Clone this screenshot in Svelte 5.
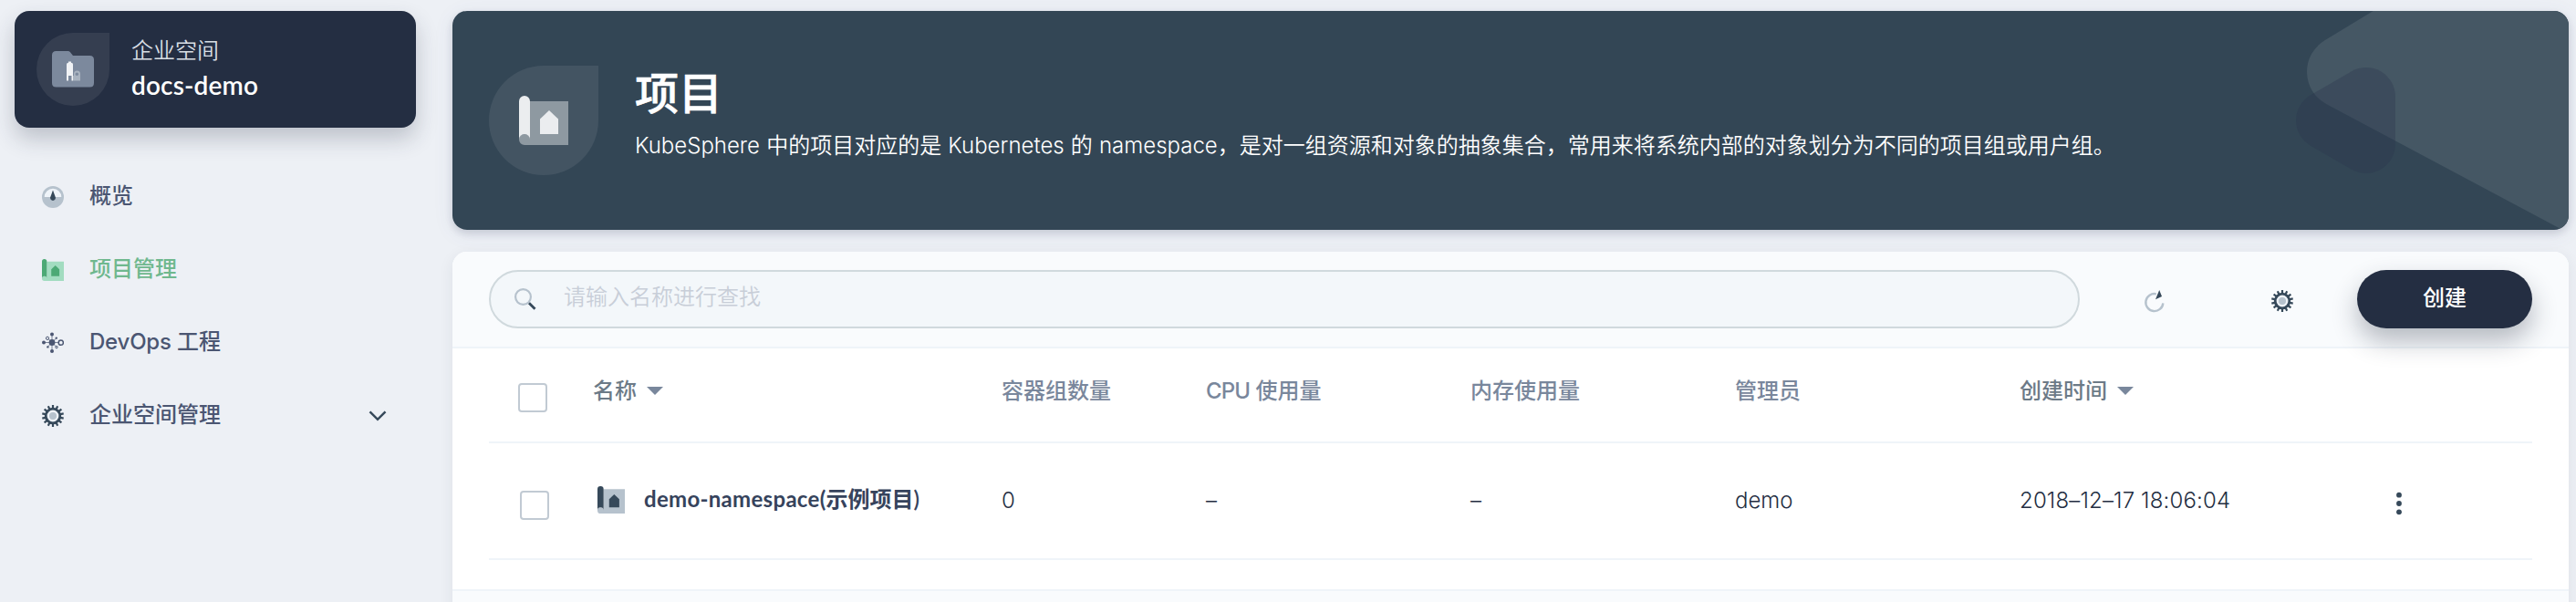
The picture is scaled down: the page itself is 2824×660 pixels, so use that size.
<script>
  const nav = [
    { id: 'overview', label: '概览' },
    { id: 'project', label: '项目管理', active: true },
    { id: 'devops', latin: 'DevOps', label: ' 工程' },
    { id: 'settings', label: '企业空间管理', expandable: true }
  ];
  const teeth = Array.from({ length: 14 }, (_, i) => (i * 360) / 14);
</script>

{#snippet gear()}
  <svg width="24" height="24" viewBox="0 0 24 24">
    <g fill="#36495a">
      {#each teeth as a}
        <rect x="10.9" y="0" width="2.2" height="4.5" transform="rotate({a} 12 12)" />
      {/each}
    </g>
    <circle cx="12" cy="12" r="7.8" fill="#eef2f7" stroke="#36495a" stroke-width="2.8" />
    <circle cx="12" cy="12" r="4" fill="#b6c2cd" />
  </svg>
{/snippet}

{#snippet blueprint(size, dark, light)}
  <svg width={size} height={size} viewBox="0 0 54 54">
    <path d="M12 6H54V54H6A6 6 0 0 1 0 48Q0 42 6 42Q12 42 12 48Z" fill={light} />
    <path d="M0 48V6A6 6 0 0 1 12 6V48A6 6 0 0 0 0 48Z" fill={dark} />
    <path d="M23 25.5L33 16L43 25.5V42H23Z" fill={dark} />
  </svg>
{/snippet}

<div class="page">
  <aside>
    <div class="workspace">
      <div class="drop small">
        <svg width="46" height="40" viewBox="0 0 46 40">
          <path d="M4.5 0H17.5Q19 0 20 1.2L23 5H41.5Q46 5 46 9.5V35Q46 39.5 41.5 39.5H4.5Q0 39.5 0 35V4.5Q0 0 4.5 0Z" fill="#7c899d" />
          <path d="M16 32.500V14.500Q16 13 18 12.800V11.500H21V12.800Q23 13 23 14.500V32.500H21.500V27H18V32.500Z" fill="#f0f2f5" />
          <path fill-rule="evenodd" d="M23 32.500V27H24V25A3.500 3.500 0 0 1 31 25V32.500ZM27.300 23.400A1.800 1.800 0 1 0 27.300 27A1.800 1.800 0 1 0 27.300 23.400Z" fill="#a9b3c0" />
        </svg>
      </div>
      <div class="wstext">
        <div class="wslabel">企业空间</div>
        <div class="wsname">docs-demo</div>
      </div>
    </div>
    <nav>
      {#each nav as item}
        <div class="item" class:active={item.active}>
          <span class="ico">
            {#if item.id === 'overview'}
              <svg width="24" height="24" viewBox="0 0 24 24">
                <circle cx="12" cy="12" r="12" fill="#b6c2cd" />
                <path d="M2.700 12A9.300 9.300 0 0 1 21.300 12Z" fill="#eff4f9" />
                <path d="M12 4.600L14.800 12.300A2.900 2.900 0 1 1 9.200 12.300Z" fill="#36495a" />
              </svg>
            {:else if item.id === 'project'}
              {@render blueprint(24, '#4ca975', '#a2dcc0')}
            {:else if item.id === 'devops'}
              <svg width="24" height="24" viewBox="0 0 24 24" fill="#4b5672" stroke="#4b5672">
                <path d="M11 3V21M2 11.500H18M6 6.500L16 16.500M6.500 16L15.500 7" fill="none" stroke-width="0.700" />
                <circle cx="11" cy="11.500" r="3.400" stroke="none" />
                <circle cx="11" cy="2.500" r="2" stroke="none" />
                <circle cx="11" cy="21" r="2" stroke="none" />
                <circle cx="2" cy="11.500" r="2" stroke="none" />
                <circle cx="6.400" cy="16.400" r="1.200" stroke="none" />
                <circle cx="15.800" cy="6.600" r="1.200" stroke="none" />
                <circle cx="20.800" cy="11.700" r="2.600" fill="#edf0f5" stroke-width="1.500" />
                <circle cx="6" cy="6.800" r="1.600" fill="#edf0f5" stroke-width="1" />
                <circle cx="16" cy="16.600" r="1.200" fill="#edf0f5" stroke-width="1" />
              </svg>
            {:else}
              {@render gear()}
            {/if}
          </span>
          <span class="navlabel">{#if item.latin}<span class="devops">{item.latin}</span>{/if}{item.label}</span>
          {#if item.expandable}
            <svg class="chev" width="20" height="12" viewBox="0 0 20 12">
              <path d="M1.500 1.300L10 9.800L18.500 1.300" fill="none" stroke="#36495a" stroke-width="2.500" />
            </svg>
          {/if}
        </div>
      {/each}
    </nav>
  </aside>

  <main>
    <header>
      <svg class="deco" width="320" height="240" viewBox="0 0 320 240">
        <path d="M105.700 0L52.500 32.300A40.200 40.200 0 0 0 54.100 102.100L313 240H320V0Z" fill="#455764" />
        <path d="M130 94V146A32 32 0 0 1 82 173.700L37 147.700A32 32 0 0 1 37 92.300L82 66.300A32 32 0 0 1 130 94Z" fill="rgba(42,54,78,0.350)" />
      </svg>
      <div class="drop">{@render blueprint(54, '#ebedef', '#8e99a1')}</div>
      <div class="headtext">
        <h1>项目</h1>
        <p>KubeSphere 中的项目对应的是 Kubernetes 的 namespace，是对一组资源和对象的抽象集合，常用来将系统内部的对象划分为不同的项目组或用户组。</p>
      </div>
    </header>

    <section>
      <div class="toolbar">
        <div class="search">
          <svg width="24" height="24" viewBox="0 0 24 24">
            <circle cx="9.500" cy="9.500" r="8.400" fill="none" stroke="#b6c2cd" stroke-width="2.200" />
            <path d="M16 16.300L22.500 22.800" stroke="#36495a" stroke-width="2.800" />
          </svg>
          <span>请输入名称进行查找</span>
        </div>
        <div class="refresh">
          <svg width="24" height="26" viewBox="0 0 24 26">
            <path d="M13.800 5.300A9.500 9.500 0 1 0 21.300 15.300" fill="none" stroke="#b6c2cd" stroke-width="2.400" />
            <path d="M17.200 1L20 8L13 11.200Z" fill="#36495a" />
          </svg>
        </div>
        <div class="config">{@render gear()}</div>
        <button>创建</button>
      </div>

      <div class="table">
        <div class="row head">
          <span class="box"></span>
          <span class="sort">名称<i></i></span>
          <span class="muted">容器组数量</span>
          <span class="muted"><span class="tight">CPU</span> 使用量</span>
          <span class="muted">内存使用量</span>
          <span class="muted">管理员</span>
          <span class="sort">创建时间<i></i></span>
          <span></span>
        </div>
        <div class="row body">
          <span class="box"></span>
          <span class="name">{@render blueprint(30, '#36495a', '#b6c2cd')}<b><span class="ns">demo-namespace(</span>示例项目)</b></span>
          <span>0</span>
          <span>–</span>
          <span>–</span>
          <span>demo</span>
          <span class="date">2018–12–17 18:06:04</span>
          <svg class="more" width="12" height="28" viewBox="0 0 12 28" fill="#36495a">
            <circle cx="6" cy="4.700" r="2.900" /><circle cx="6" cy="14" r="2.900" /><circle cx="6" cy="23.300" r="2.900" />
          </svg>
        </div>
      </div>
      <div class="foot"></div>
    </section>
  </main>
</div>

<style>
  :global(body) { background: #edf0f5; overflow: hidden; }
  .page {
    box-sizing: border-box; width: 2824px; height: 660px; padding: 12px 8px 0 16px;
    display: flex; gap: 40px; overflow: hidden; background: #edf0f5;
    font: 24px/36px Inter, "Noto Sans CJK SC", sans-serif; color: #242e42; white-space: nowrap;
  }
  svg { display: block; flex: none; }
  aside { width: 440px; flex: none; }
  .workspace {
    box-sizing: border-box; height: 128px; padding: 24px; display: flex; gap: 24px;
    border-radius: 16px; background: #242e42; box-shadow: 0 12px 24px rgba(36, 46, 66, 0.24);
  }
  .drop {
    width: 120px; height: 120px; flex: none; display: flex; align-items: center; justify-content: center;
    border-radius: 60px 0 60px 60px; background: rgba(255, 255, 255, 0.08);
  }
  .drop.small { width: 80px; height: 80px; border-radius: 40px 0 40px 40px; }
  .wslabel { height: 40px; line-height: 39px; color: #d8dee5; font-weight: 350; }
  .wsname { font-size: 28px; line-height: 34px; color: #fff; font-weight: 600; font-family: Lato, sans-serif; letter-spacing: 0.15px; }
  nav { padding: 36px 0 0 30px; }
  .item { height: 80px; display: flex; align-items: center; color: #4b5672; font-weight: 500; }
  .item.active { color: #6fb88e; }
  .navlabel { padding-bottom: 2px; }
  .devops { font-weight: 450; letter-spacing: -0.2px; }
  .ico { width: 52px; }
  .chev { margin-left: auto; margin-right: 32px; }
  main { width: 2320px; display: flex; flex-direction: column; gap: 24px; }
  header {
    position: relative; flex: none; box-sizing: border-box; height: 240px; padding: 60px 40px; display: flex; gap: 40px;
    overflow: hidden; border-radius: 16px; background: #334655; color: #fff;
    box-shadow: 0 4px 8px rgba(36, 46, 66, 0.16), 0 4px 24px rgba(72, 91, 160, 0.07);
  }
  .deco { position: absolute; top: 0; right: 0; }
  h1 { margin: 0; font-size: 48px; line-height: 62px; font-weight: 500; -webkit-text-stroke: 0.6px #fff; }
  p { margin: 6px 0 0; line-height: 40px; font-weight: 350; word-spacing: 0.4px; }
  .tight { letter-spacing: -0.9px; }
  section {
    flex: none; height: 400px; overflow: hidden; border-radius: 16px 16px 0 0; background: #fff;
    box-shadow: 0 4px 16px rgba(36, 46, 66, 0.08);
  }
  .toolbar {
    box-sizing: border-box; height: 106px; padding: 20px 40px 20px; display: flex; align-items: center;
    background: #f9fbfd; border-bottom: 2px solid #eff4f9;
  }
  .search {
    box-sizing: border-box; width: 1744px; height: 64px; padding-left: 26px; display: flex; align-items: center; gap: 30px;
    border: 2px solid #d0d9dd; border-radius: 32px; background: #f3f7fa; color: #c8ced8; font-weight: 350;
  }
  .search span { padding-bottom: 4px; }
  .refresh { margin-left: 70px; }
  .config { margin-left: 116px; }
  .config, .refresh { padding-top: 4px; }
  button {
    width: 192px; height: 64px; margin-left: 70px; padding: 0 0 2px; border: 0; border-radius: 32px;
    background: #242e42; color: #fff; font: inherit; font-weight: 500; box-shadow: 0 14px 28px rgba(36, 46, 66, 0.32);
  }
  .table { padding: 0 40px; }
  .row {
    box-sizing: border-box; display: grid; grid-template-columns: 114px 448px 224px 290px 290px 312px 410px 1fr;
    border-bottom: 2px solid #eff4f9;
  }
  .head { height: 104px; padding-top: 29px; font-weight: 500; }
  .body { height: 128px; padding-top: 44px; line-height: 38px; font-weight: 350; }
  .box { box-sizing: border-box; width: 32px; height: 32px; border: 2px solid #c1cad3; border-radius: 4px; margin: 9px 0 0 32px; }
  .body .box { margin: 8px 0 0 34px; }
  .sort { display: flex; align-items: flex-start; gap: 11px; color: #6c7a87; }
  .sort i { margin-top: 13px; border: 9px solid transparent; border-top-color: #79879c; border-bottom: 0; }
  .muted { color: #79879c; }
  .date { letter-spacing: 0.15px; }
  .name { display: flex; padding-left: 5px; gap: 21px; align-items: flex-start; color: #36435c; }
  .name svg { margin-top: 3px; }
  b { font-family: Lato, "Noto Sans CJK SC", sans-serif; line-height: 34px; font-weight: 600; }
  .ns { font-weight: 700; letter-spacing: 0.3px; }
  .more { margin-top: 8px; }
  .foot { height: 66px; margin-top: 32px; border-top: 2px solid #eff4f9; background: #f9fbfd; }
</style>
